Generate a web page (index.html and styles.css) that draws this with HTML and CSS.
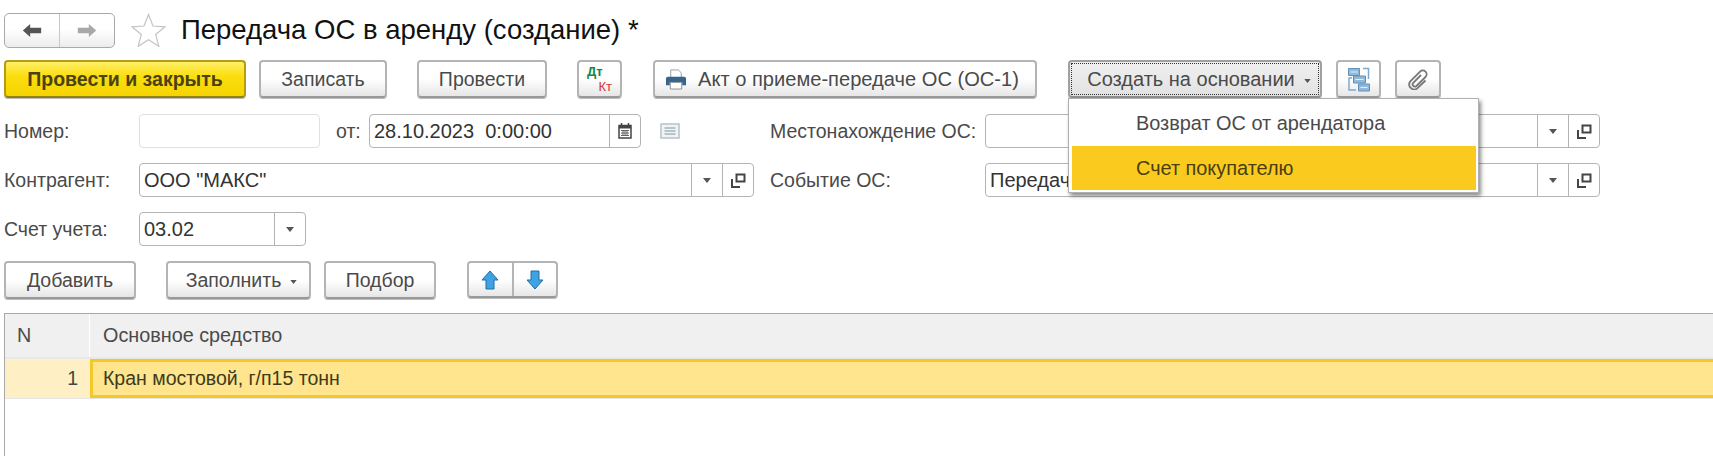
FILE: index.html
```html
<!DOCTYPE html>
<html lang="ru">
<head>
<meta charset="utf-8">
<title>Передача ОС в аренду</title>
<link rel="stylesheet" href="styles.css">
</head>
<body>
<svg class="defs" width="0" height="0">
  <symbol id="open" viewBox="0 0 15 15"><path d="M5.500 1.500h8v7h-8z" fill="#fff" stroke="#444" stroke-width="2"/><path d="M1 6v8h8" fill="none" stroke="#444" stroke-width="2"/></symbol>
  <symbol id="tri" viewBox="0 0 8 5"><path d="M0 0h8L4 5z" fill="#555"/></symbol>
</svg>
<div class="page">
  <header class="head">
    <div class="navgroup">
      <span class="navbtn navbtn-l"><svg width="22" height="15" viewBox="0 0 24 16"><path d="M2 8l8-7v4h12v6H10v4z" fill="#555"/></svg></span>
      <span class="navbtn"><svg width="22" height="15" viewBox="0 0 24 16"><path d="M22 8l-8-7v4H2v6h12v4z" fill="#a8a8a8"/></svg></span>
    </div>
    <svg class="star" width="35" height="34" viewBox="0 0 35 34"><path d="M17.500 1.500l4.500 11.500 12 .8-9.300 7.700 3.100 11.800-10.300-6.500-10.300 6.500 3.100-11.800-9.300-7.700 12-.8z" fill="#fff" stroke="#c4c4c4" stroke-width="1.200"/></svg>
    <h1 class="title">Передача ОС в аренду (создание) *</h1>
  </header>

  <div class="toolbar">
    <button class="btn primary w-post">Провести и закрыть</button>
    <button class="btn w-save">Записать</button>
    <button class="btn w-run">Провести</button>
    <button class="btn w-dtkt"><span class="dtkt"><span class="dt">Дт</span><span class="kt">Кт</span></span></button>
    <button class="btn w-act">
      <svg width="22" height="21" viewBox="0 0 21 22"><path d="M5 1h8l3 3v5H5z" fill="#fff" stroke="#9a9a9a"/><path d="M2 8h17q2 0 2 2v7h-4v-3H4v3H0v-7q0-2 2-2z" fill="#35648f"/><path d="M4.500 14h12v7h-12z" fill="#fff" stroke="#8a8a8a"/></svg>
      <span>Акт о приеме-передаче ОС (ОС-1)</span>
    </button>
    <button class="btn focused w-create"><span class="focus-in">Создать на основании<svg class="tri-s" width="7" height="4"><use href="#tri"/></svg></span></button>
    <button class="btn w-icon gap-a">
      <svg width="22" height="25" viewBox="0 0 22 25"><path d="M15 1.500h5.500V12M4 11H1v12h7" fill="none" stroke="#7fa8cc" stroke-width="1.500"/><path d="M.5 1.500h11v7H.5zM5.500 9h12v7h-12zM10.500 17h11v7h-11z" fill="#93b9da" stroke="#5f90b8"/><path d="M2.500 5h7M7.500 12.500h8M12.500 20.500h7" stroke="#e4eef6"/></svg>
    </button>
    <button class="btn w-icon">
      <svg width="22" height="21" viewBox="0 0 22 21"><path d="M14 6L6 14a2.300 2.300 0 0 0 3.200 3.200L18.500 8a3.800 3.800 0 0 0-5.400-5.400L3.300 12.400a5 5 0 0 0 7 7L18.500 11.500" fill="none" stroke="#777" stroke-width="1.800"/></svg>
    </button>
  </div>

  <div class="form">
    <div class="frow">
      <label class="lbl">Номер:</label>
      <div class="field off w-num"></div>
      <label class="lbl-from">от:</label>
      <div class="field w-date"><span class="val">28.10.2023&nbsp; 0:00:00</span>
        <span class="cell c-date"><svg width="14" height="16" viewBox="0 0 14 16"><path d="M1 2.500h12V15H1z" fill="#fff" stroke="#444" stroke-width="1.500"/><path d="M1 2h12v3.500H1z" fill="#444"/><path d="M3.500 0v3M10.500 0v3" stroke="#444" stroke-width="1.500"/><path d="M3 7.500h8M3 10h8M3 12.500h8M5 7v6M7 7v6M9 7v6" stroke="#666"/></svg></span>
      </div>
      <svg class="note" width="20" height="16" viewBox="0 0 20 16"><path d="M1 1h18v14H1z" fill="#f1f4f6" stroke="#b6c2cb" stroke-width="1.500"/><path d="M4.500 5h11M4.500 8h11M4.500 11h11" stroke="#a5b2bc" stroke-width="1.300"/></svg>
      <label class="lbl-r l-a">Местонахождение ОС:</label>
      <div class="field w-r"><span class="val"></span>
        <span class="cell c-tri"><svg width="8" height="5"><use href="#tri"/></svg></span>
        <span class="cell c-open"><svg width="15" height="15"><use href="#open"/></svg></span>
      </div>
    </div>
    <div class="frow">
      <label class="lbl">Контрагент:</label>
      <div class="field w-ctr"><span class="val">ООО "МАКС"</span>
        <span class="cell c-tri"><svg width="8" height="5"><use href="#tri"/></svg></span>
        <span class="cell c-open"><svg width="15" height="15"><use href="#open"/></svg></span>
      </div>
      <label class="lbl-r l-b">Событие ОС:</label>
      <div class="field w-r"><span class="val">Передача в аренду</span>
        <span class="cell c-tri"><svg width="8" height="5"><use href="#tri"/></svg></span>
        <span class="cell c-open"><svg width="15" height="15"><use href="#open"/></svg></span>
      </div>
    </div>
    <div class="frow">
      <label class="lbl">Счет учета:</label>
      <div class="field w-acc"><span class="val">03.02</span>
        <span class="cell c-tri"><svg width="8" height="5"><use href="#tri"/></svg></span>
      </div>
    </div>
  </div>

  <div class="tbar">
    <button class="btn w-add">Добавить</button>
    <button class="btn w-fill">Заполнить<svg class="tri-s" width="7" height="4"><use href="#tri"/></svg></button>
    <button class="btn w-pick">Подбор</button>
    <div class="updown">
      <span class="ud ud-l"><svg width="18" height="20" viewBox="0 0 18 20"><path d="M9 1l8 9h-4v9H5v-9H1z" fill="#3fa2e2" stroke="#1f6ea6"/></svg></span>
      <span class="ud"><svg width="18" height="20" viewBox="0 0 18 20"><path d="M9 19l8-9h-4V1H5v9H1z" fill="#3fa2e2" stroke="#1f6ea6"/></svg></span>
    </div>
  </div>

  <section class="grid">
    <div class="ghead">
      <div class="gc-n">N</div>
      <div class="gc-main">Основное средство</div>
    </div>
    <div class="grow">
      <div class="gc-n num">1</div>
      <div class="gc-main sel">Кран мостовой, г/п15 тонн</div>
    </div>
  </section>
</div>

<div class="menu">
  <div class="mi">Возврат ОС от арендатора</div>
  <div class="mi active">Счет покупателю</div>
</div>
</body>
</html>
```
FILE: styles.css
```css
* { box-sizing: border-box; }
html, body { margin: 0; padding: 0; background: #fff; }
body {
  width: 1713px; height: 456px; overflow: hidden; position: relative;
  font-family: "Liberation Sans", Arial, sans-serif; font-size: 19.500px; color: #4a4a4a;
}
.defs { position: absolute; }
.page { padding: 12px 0 0 4px; }

.head { display: flex; align-items: center; height: 36px; }
.navgroup {
  display: flex; width: 111px; height: 35px; border: 1px solid #a9a9a9; border-radius: 5px;
  background: linear-gradient(#fff, #fff 45%, #ececec);
}
.navbtn { flex: 1; display: flex; align-items: center; justify-content: center; }
.navbtn-l { border-right: 1px solid #c8c8c8; }
.star { margin-left: 16px; }
.title { margin: 0 0 0 15px; font-size: 27.500px; font-weight: 400; color: #111; white-space: nowrap; }

.btn {
  display: flex; align-items: center; justify-content: center; gap: 10px; padding: 0;
  height: 38px; font: inherit; color: #4a4a4a; white-space: nowrap;
  border: 2px solid #b4b4b4; border-bottom-color: #999; border-radius: 4px;
  background: linear-gradient(#fff, #fff 50%, #e6e6e6);
  box-shadow: 0 1px 0 #bbb;
}
.primary {
  font-weight: 700; color: #4b4212; border-color: #b79c12; border-bottom-color: #93800e;
  background: linear-gradient(#fff06a, #fbde10 40%, #f5d400);
}
.focused {
  border-color: #a0a0a0; border-bottom-color: #8e8e8e; background: linear-gradient(#f0f0f0, #e2e2e2);
  padding: 1px; font-size: 20px;
}
.focus-in {
  display: flex; align-items: center; justify-content: center; width: 100%; height: 100%;
  padding-left: 8px; border: 1px dotted #333;
}
.tri-s { margin-left: 9px; margin-top: 3px; }

.toolbar { display: flex; height: 38px; margin-top: 12px; }
.w-post { width: 242px; }
.w-save { width: 128px; margin-left: 13px; }
.w-run { width: 130px; margin-left: 30px; }
.w-dtkt { width: 45px; margin-left: 30px; }
.w-act { width: 384px; margin-left: 31px; justify-content: flex-start; gap: 11px; padding-left: 10px; font-size: 20.100px; }
.w-create { width: 254px; margin-left: 31px; }
.w-icon { width: 45px; }
.gap-a { margin-left: 14px; }
.w-icon + .w-icon { width: 46px; margin-left: 14px; }

.dtkt { display: flex; flex-direction: column; width: 25px; font-size: 13px; line-height: 15px; }
.dt { color: #0f8a45; font-weight: 700; align-self: flex-start; }
.kt { color: #d0343c; align-self: flex-end; }

.form { display: flex; flex-direction: column; gap: 15px; margin-top: 16px; }
.frow { display: flex; align-items: center; height: 34px; }
.lbl { width: 135px; }
.lbl-from { margin-left: 16px; width: 33px; }
.lbl-r { white-space: nowrap; }
.l-a { margin-left: 90px; width: 215px; }
.l-b { margin-left: 16px; width: 215px; }

.field {
  display: flex; align-items: center; height: 34px; border: 1px solid #b4b4b4; border-radius: 4px;
  background: #fff; color: #333;
}
.off { border-color: #e0e0e0; }
.val { flex: 1; padding-left: 4px; white-space: nowrap; overflow: hidden; font-size: 20px; }
.cell { display: flex; align-items: center; justify-content: center; height: 100%; border-left: 1px solid #b4b4b4; }
.c-tri { width: 31px; }
.c-open { width: 31px; }
.c-date { width: 31px; }
.w-num { width: 181px; }
.w-date { width: 272px; }
.note { margin-left: 19px; }
.w-r { width: 615px; }
.w-ctr { width: 615px; }
.w-acc { width: 167px; }

.tbar { display: flex; height: 37px; margin-top: 15px; }
.w-add { width: 132px; }
.w-fill { width: 145px; margin-left: 30px; gap: 0; padding-left: 6px; }
.w-pick { width: 112px; margin-left: 13px; }
.updown {
  display: flex; width: 91px; margin-left: 31px; border: 2px solid #b4b4b4; border-bottom-color: #999;
  border-radius: 4px; background: linear-gradient(#fff, #fff 50%, #e6e6e6); box-shadow: 0 1px 0 #bbb;
}
.ud { flex: 1; display: flex; align-items: center; justify-content: center; }
.ud-l { border-right: 2px solid #b4b4b4; }

.grid {
  margin-top: 15px; height: 144px; border: 1px solid #a8a8a8; border-width: 1px 0 0 1px;
}
.ghead { display: flex; height: 45px; background: #f0f0f0; border-bottom: 2px solid #e8e8e8; font-size: 19.800px; }
.ghead .gc-n { width: 85px; padding-left: 12px; line-height: 42px; border-right: 1px solid #fff; }
.ghead .gc-main { flex: 1; padding-left: 13px; line-height: 42px; }
.grow { display: flex; height: 40px; border-bottom: 1px solid #e4e4e4; background: #fef0c4; }
.num { width: 85px; padding-right: 12px; text-align: right; line-height: 38px; color: #444; }
.sel {
  flex: 1; padding-left: 10px; line-height: 32px; background: #fee58e; color: #3d3a20;
  border: 3px solid #f4c82a; border-right: 0;
}

.menu {
  position: absolute; left: 1068px; top: 98px; width: 411px; height: 95px; padding: 2px 2px 3px 3px;
  background: #fff; border: 1px solid #b0b0b0; box-shadow: 2px 3px 4px rgba(0,0,0,.45); font-size: 19.900px;
}
.mi { height: 45px; padding-left: 64px; display: flex; align-items: center; }
.active { background: #fbca1e; color: #4a3f10; height: 44px; }
```
